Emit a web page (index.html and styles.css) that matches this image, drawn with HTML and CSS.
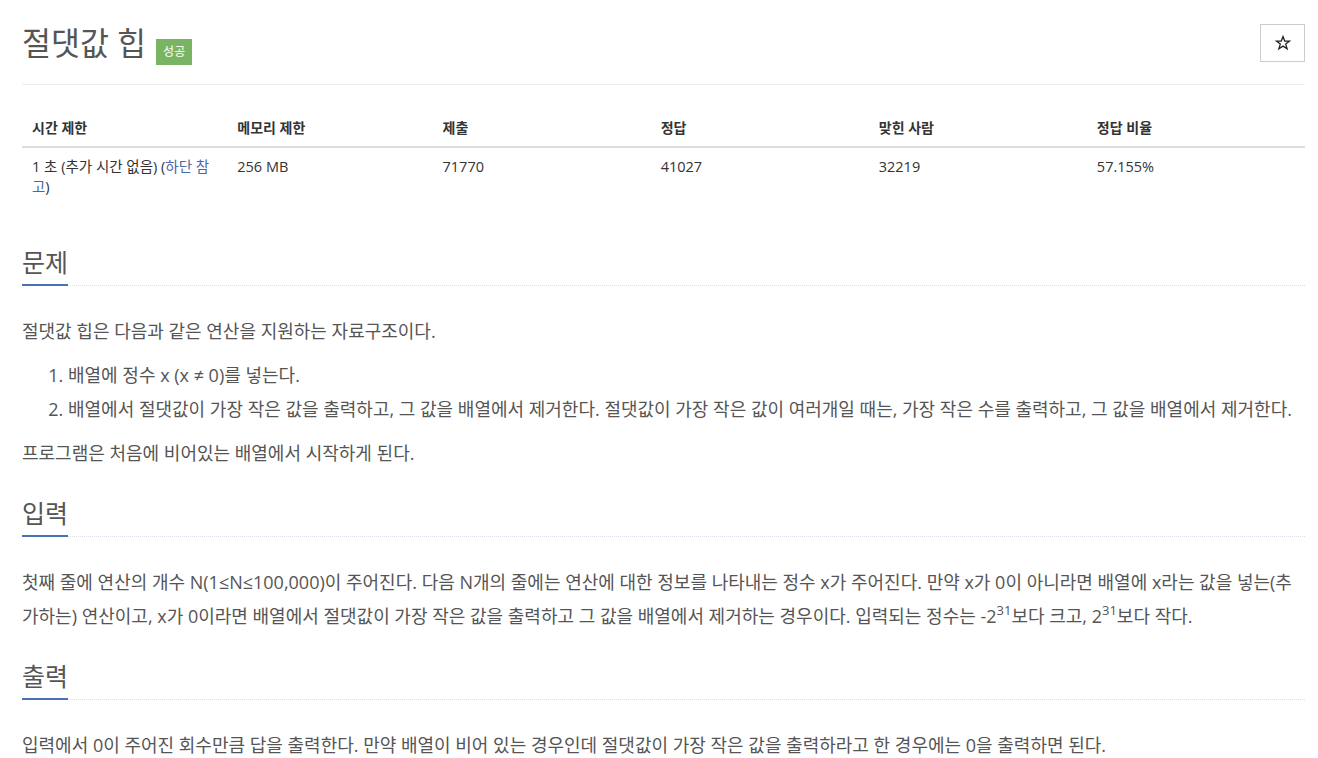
FILE: index.html
```html
<!DOCTYPE html>
<html lang="ko">
<head>
<meta charset="utf-8">
<title>절댓값 힙</title>
<link rel="stylesheet" href="styles.css">
</head>
<body>
<div class="page">
  <div class="page-header">
    <h1 class="title"><span class="title-text">절댓값 힙</span><span class="badge">성공</span></h1>
    <button class="star-btn" type="button" aria-label="즐겨찾기">
      <svg width="16" height="16" viewBox="0 0 16 16" aria-hidden="true">
        <path d="M8 1.6 L9.7 6.1 L14.5 6.2 L10.7 9.1 L12.1 13.8 L8 11.1 L3.9 13.8 L5.3 9.1 L1.5 6.2 L6.3 6.1 Z" fill="none" stroke="#222" stroke-width="1.3" stroke-linejoin="miter"/>
      </svg>
    </button>
  </div>

  <table class="info">
    <thead>
      <tr>
        <th class="c16">시간 제한</th>
        <th class="c16">메모리 제한</th>
        <th class="c17">제출</th>
        <th class="c17">정답</th>
        <th class="c17">맞힌 사람</th>
        <th class="c17">정답 비율</th>
      </tr>
    </thead>
    <tbody>
      <tr>
        <td>1 초 (추가 시간 없음) (<a href="#" class="link">하단 참고</a>)</td>
        <td>256 MB</td>
        <td>71770</td>
        <td>41027</td>
        <td>32219</td>
        <td>57.155%</td>
      </tr>
    </tbody>
  </table>

  <section class="section">
    <div class="headline"><h2>문제</h2></div>
    <div class="text">
      <p>절댓값 힙은 다음과 같은 연산을 지원하는 자료구조이다.</p>
      <ol>
        <li>배열에 정수 x (x ≠ 0)를 넣는다.</li>
        <li>배열에서 절댓값이 가장 작은 값을 출력하고, 그 값을 배열에서 제거한다. 절댓값이 가장 작은 값이 여러개일 때는, 가장 작은 수를 출력하고, 그 값을 배열에서 제거한다.</li>
      </ol>
      <p>프로그램은 처음에 비어있는 배열에서 시작하게 된다.</p>
    </div>
  </section>

  <section class="section">
    <div class="headline"><h2>입력</h2></div>
    <div class="text">
      <p>첫째 줄에 연산의 개수 N(1≤N≤100,000)이 주어진다. 다음 N개의 줄에는 연산에 대한 정보를 나타내는 정수 x가 주어진다. 만약 x가 0이 아니라면 배열에 x라는 값을 넣는(추가하는) 연산이고, x가 0이라면 배열에서 절댓값이 가장 작은 값을 출력하고 그 값을 배열에서 제거하는 경우이다. 입력되는 정수는 -2<sup>31</sup>보다 크고, 2<sup>31</sup>보다 작다.</p>
    </div>
  </section>

  <section class="section">
    <div class="headline"><h2>출력</h2></div>
    <div class="text">
      <p>입력에서 0이 주어진 회수만큼 답을 출력한다. 만약 배열이 비어 있는 경우인데 절댓값이 가장 작은 값을 출력하라고 한 경우에는 0을 출력하면 된다.</p>
    </div>
  </section>
</div>
</body>
</html>
```

FILE: styles.css
```css
* { box-sizing: border-box; }

html, body {
  margin: 0;
  padding: 0;
  background: #fff;
}

body {
  font-family: "Open Sans", "Noto Sans CJK KR", sans-serif;
  color: #333;
  font-size: 14px;
  line-height: 20px;
}

.page {
  padding: 24px 13px 0 22px;
}

.page-header {
  display: flex;
  justify-content: space-between;
  align-items: flex-start;
  padding-bottom: 22px;
  border-bottom: 1px solid #eee;
}

.title {
  display: flex;
  align-items: flex-start;
  gap: 10px;
  margin: 0;
  height: 38px;
  font-size: 31.5px;
  line-height: 38px;
  font-weight: 400;
  color: #555;
}

.badge {
  display: block;
  margin-top: 15px;
  background: #79b463;
  color: #fff;
  font-size: 12px;
  line-height: 26px;
  height: 26px;
  padding: 0 7px;
  font-weight: 400;
}

.star-btn {
  display: flex;
  align-items: center;
  justify-content: center;
  width: 45px;
  height: 38px;
  border: 1px solid #ccc;
  background: #fff;
  padding: 0;
  border-radius: 0;
}

.info {
  width: 100%;
  border-collapse: collapse;
  margin-top: 25px;
}

.info th,
.info td {
  text-align: left;
  padding: 8px 10px;
  vertical-align: top;
  line-height: 20px;
}

.info th {
  font-weight: 700;
  border-bottom: 2px solid #ddd;
}

.info td {
  font-size: 14.5px;
  padding-top: 9px;
  padding-bottom: 7px;
}

.c16 { width: 16%; }
.c17 { width: 17%; }

.link {
  color: #4b68a8;
  text-decoration: none;
}

.section {
  margin-top: 45px;
}

.section + .section {
  margin-top: 30px;
}

.headline {
  border-bottom: 1px dotted #dde0ea;
}

.headline h2 {
  display: inline-block;
  margin: 0 0 -1px;
  font-size: 25px;
  line-height: 26px;
  font-weight: 400;
  color: #555;
  padding-bottom: 9px;
  border-bottom: 2px solid #4872b5;
}

.text {
  padding-top: 28px;
  color: #555;
  font-size: 18px;
  line-height: 34px;
}

.text p {
  margin: 0 0 10px;
}

.text ol {
  margin: 0 0 10px;
  padding-left: 46px;
}

.text sup {
  font-size: 13px;
  line-height: 0;
  position: relative;
  vertical-align: baseline;
  top: -8px;
}
```
